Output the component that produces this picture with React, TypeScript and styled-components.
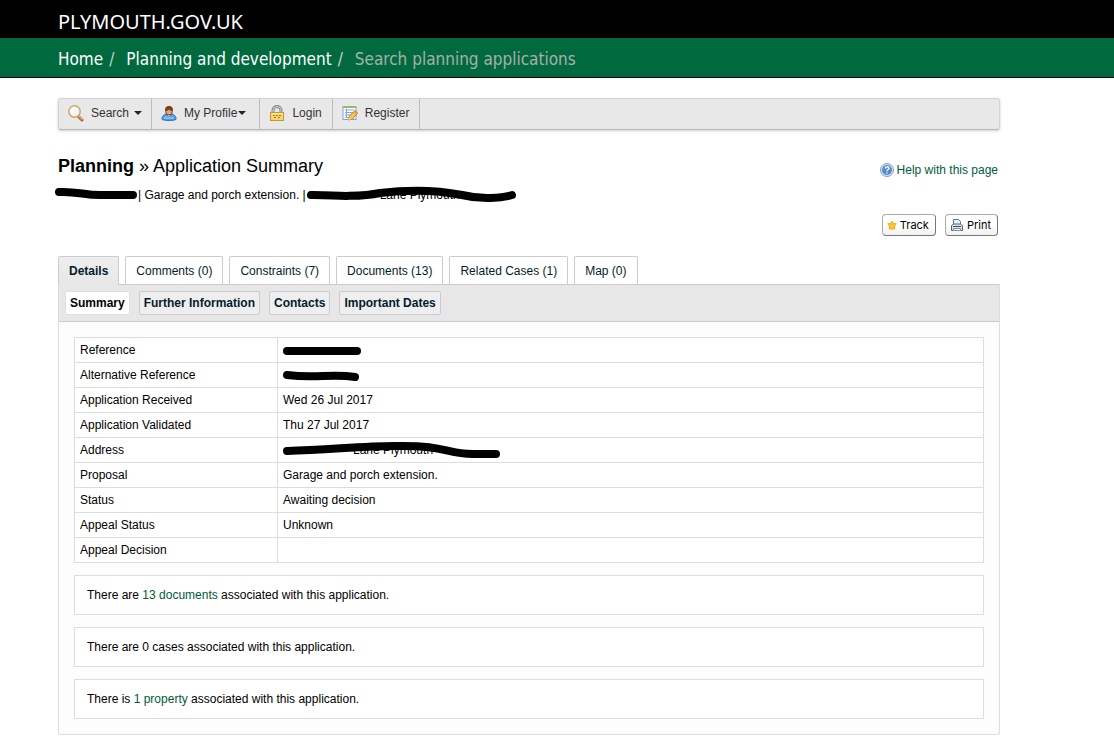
import React from "react";
import styled, { createGlobalStyle } from "styled-components";

const GlobalStyle = createGlobalStyle`
  * { box-sizing: border-box; }
  body {
    margin: 0;
    background: #fff;
    color: #000;
    font: 12px/16px "Liberation Sans", Arial, sans-serif;
  }
  a { color: #005c37; text-decoration: none; }
  svg { display: block; flex: none; }
`;

const SiteBar = styled.header`
  background: #000;
  height: 38px;
  padding: 7px 58px 0;
  a {
    color: #fff;
    font: 20px/30px "Noto Sans", Tahoma, sans-serif;
  }
`;

const Breadcrumb = styled.nav`
  display: flex;
  align-items: center;
  height: 40px;
  padding: 2px 58px 0;
  background: #006a3e;
  border-bottom: 1px solid #000;
  color: #ccc;
  font: 17px/24px "DejaVu Sans Condensed", Tahoma, "Noto Sans", sans-serif;
  a { color: #fff; }
`;

const Slash = styled.span`
  margin: 0 12px 0 6px;
`;

const Crumb = styled.span`
  color: #a9aeab;
`;

const Page = styled.main`
  padding: 20px 114px 1px 58px;
`;

const Toolbar = styled.nav`
  display: flex;
  height: 32px;
  background: #e8e8e8;
  border: 1px solid #d4d4d4;
  border-bottom-color: #b8b8b8;
  border-radius: 3px;
  box-shadow: 0 1px 3px #ccc;
`;

const ToolbarItem = styled.button<{ $wide?: boolean }>`
  display: flex;
  align-items: center;
  gap: 7px;
  padding: 0 ${(p) => (p.$wide ? 13 : 9)}px 2px 9px;
  border: 0;
  border-right: 1px solid #bcbcc0;
  background: none;
  color: #333;
  font: inherit;
`;

const ToolbarLink = styled(ToolbarItem).attrs({ as: "a" })<{ href?: string }>`
  padding-right: 10px;
  color: #333;
`;

const MenuLabel = styled.span<{ $gap: number }>`
  display: flex;
  align-items: center;
  gap: ${(p) => p.$gap}px;
`;

const Intro = styled.div`
  display: flex;
  justify-content: space-between;
  padding: 24px 2px 0 0;
  height: 126px;
`;

const Title = styled.h1`
  margin: 0;
  font-size: 18px;
  line-height: 24px;
  font-weight: normal;
`;

const Description = styled.p`
  display: flex;
  margin: 9px 0 0;
`;

const Redacted = styled.span<{ $width: number; $indent?: number }>`
  position: relative;
  display: inline-block;
  height: 16px;
  width: ${(p) => p.$width}px;
  padding-left: ${(p) => p.$indent ?? 0}px;
  white-space: nowrap;
  vertical-align: top;
  svg {
    position: absolute;
    left: -4px;
    top: 0;
    overflow: visible;
  }
`;

const Actions = styled.div`
  display: flex;
  flex-direction: column;
  align-items: flex-end;
  gap: 36px;
  padding-top: 8px;
`;

const HelpLink = styled.a`
  display: flex;
  align-items: center;
  gap: 3px;
`;

const ButtonRow = styled.div`
  display: flex;
  gap: 9px;
`;

const ActionButton = styled.button`
  display: flex;
  align-items: center;
  gap: 3px;
  height: 22px;
  padding: 0 6px 0 4px;
  border: 1px solid #aaa;
  border-right-color: #777;
  border-bottom-color: #777;
  border-radius: 4px;
  background: linear-gradient(#fff 50%, #f1f1f1);
  color: #000;
  font: 11px/16px Inter, sans-serif;
`;

const Tabs = styled.nav`
  display: flex;
  gap: 6px;
`;

const Tab = styled.a<{ $active?: boolean }>`
  height: ${(p) => (p.$active ? 29 : 28)}px;
  margin-bottom: ${(p) => (p.$active ? -1 : 0)}px;
  z-index: 1;
  padding: 6px 10px;
  border: 1px solid #ccc;
  border-bottom: 0;
  border-radius: 2px 2px 0 0;
  background: ${(p) => (p.$active ? "linear-gradient(#eee, #e7e7e7)" : "#fff")};
  color: #051c2c;
  font-weight: ${(p) => (p.$active ? "bold" : "normal")};
`;

const Panel = styled.section`
  border: 1px solid #ddd;
  border-top-color: #ccc;
  border-radius: 0 0 3px 3px;
  background: #fdfdfd;
`;

const SubTabs = styled.nav`
  display: flex;
  gap: 9px;
  height: 37px;
  padding: 6px;
  background: #e7e7e7;
  border-bottom: 1px solid #ccc;
`;

const SubTab = styled.a<{ $active?: boolean }>`
  height: 24px;
  padding: 3px 4px;
  border: 1px solid ${(p) => (p.$active ? "#e0e0e0" : "#ccc")};
  border-radius: 2px;
  background: ${(p) => (p.$active ? "#fff" : "#eee")};
  color: ${(p) => (p.$active ? "#000" : "#051c2c")};
  font-weight: bold;
`;

const PanelBody = styled.div`
  display: grid;
  gap: 12px;
  padding: 15px;
`;

const DetailsTable = styled.table`
  width: 100%;
  border-collapse: collapse;
  background: #fff;
  th, td {
    height: 25px;
    padding: 4px 5px;
    border: 1px solid #ddd;
    font-weight: normal;
    text-align: left;
    line-height: 16px;
  }
  th { width: 203px; }
`;

const Note = styled.p`
  margin: 0;
  padding: 11px 12px;
  border: 1px solid #ddd;
  background: #fff;
`;

const Scribble = ({ d }: { d: string }) => (
  <svg width="10" height="16" fill="none" stroke="#000" strokeWidth="8" strokeLinecap="round" strokeLinejoin="round" aria-hidden="true">
    <path d={d} />
  </svg>
);

const Caret = () => (
  <svg width="8" height="4" viewBox="0 0 8 4"><path d="M0 0h8L4 4z" fill="#222" /></svg>
);

const SearchIcon = () => (
  <svg width="16" height="18" viewBox="1 0 16 18">
    <path d="m11 12 4 4" stroke="#9a5d31" strokeWidth="3" strokeLinecap="round" />
    <path d="m11 11.500 4 4" stroke="#e1ab68" strokeWidth="1.500" strokeLinecap="round" />
    <circle cx="7.500" cy="7.500" r="5.700" fill="#eef7ff" stroke="#d8a657" strokeWidth="1.500" />
    <path d="M4.500 8a3 3 0 0 1 3-3.500" stroke="#fff" strokeWidth="1.500" fill="none" />
  </svg>
);

const ProfileIcon = () => (
  <svg width="16" height="16" viewBox="0 0 16 16">
    <path d="M1.200 14.500c-1-1.500 1-5 4-5.500l2.800 2 2.800-2c3 .5 5 4 4 5.500-2 1.200-11.600 1.200-13.600 0z" fill="#5ba2ee" stroke="#2864bb" />
    <path d="M3 13h10" stroke="#a6d2ff" />
    <path d="m6 9 2 2.500L10 9z" fill="#fff" />
    <ellipse cx="8" cy="6.500" rx="3.300" ry="3.500" fill="#e8a878" stroke="#7c3f1b" />
    <path d="M4.200 6C3.500 2.500 5.500 1 8 1s4.500 1.500 3.800 5c-1.800 0-2.800-.6-3.800-1.600C7 5.400 6 6 4.200 6z" fill="#78411f" />
  </svg>
);

const LoginIcon = () => (
  <svg width="16" height="16" viewBox="0 0 16 16">
    <path d="M4 8V5a4 3.500 0 0 1 8 0v3" fill="none" stroke="#858585" strokeWidth="3" />
    <path d="M4 8V5a4 3.500 0 0 1 8 0v3" fill="none" stroke="#d5d5d5" />
    <rect x="1.500" y="7.500" width="13" height="8" fill="#f5d66c" stroke="#c89531" />
    <path d="M2.500 8.500h11" stroke="#fff1b0" />
    <path d="M4 10.500h2m1 0h2m1 0h2M5 12.500h2m2 0h2" stroke="#b77c1c" />
  </svg>
);

const RegisterIcon = () => (
  <svg width="16" height="16" viewBox="0 0 16 16">
    <rect x="1" y="1.500" width="13" height="13" fill="#fff" stroke="#79a4d9" />
    <path d="M1 2h13" stroke="#91bc70" strokeWidth="2" />
    <path d="M3 5h9M3 7.500h9M3 10h7M3 12.500h4M4.500 4v9" stroke="#86a9d6" />
    <path d="m6.500 15 1-4L13 5.500 15.500 8 10.500 14z" fill="#f8c449" stroke="#c37b28" />
    <path d="m12.500 6 2.500 2.500" stroke="#e58b66" strokeWidth="2" />
    <path d="m6.500 15 1-3 2 2z" fill="#fae3b7" />
  </svg>
);

const HelpIcon = () => (
  <svg width="14" height="14" viewBox="0 0 14 14">
    <circle cx="7" cy="7" r="6.500" fill="#d6e4f4" stroke="#7f9fcb" />
    <circle cx="7" cy="7" r="5" fill="#5a88c7" />
    <path d="M5.200 5.500c0-2.300 3.800-2.300 3.800-.2C9 6.600 7 6.500 7 8.200M7 9.300v1.200" fill="none" stroke="#fff" strokeWidth="1.300" />
  </svg>
);

const StarIcon = () => (
  <svg width="10" height="10" viewBox="0 0 10 10">
    <path d="m5 1 1.200 2.500 3 .2-1.700 2.300.3 3H2.200l.3-3L.8 3.700l3-.2z" fill="#fac42f" stroke="#f0ad22" strokeLinejoin="round" />
  </svg>
);

const PrintIcon = () => (
  <svg width="14" height="14" viewBox="0 0 14 14">
    <path d="M3.500 7V1.500h5l2 2V7" fill="#e8f2ff" stroke="#5079bd" />
    <path d="M1.500 12.500v-5l2-1.500h7l2 1.500v5z" fill="#dce0e8" stroke="#596170" />
    <path d="M3 8.500h8" stroke="#454c5a" />
    <path d="M3.500 10.500h7v2h-7z" fill="#fff" stroke="#7992bc" />
  </svg>
);

const tabs = ["Details", "Comments (0)", "Constraints (7)", "Documents (13)", "Related Cases (1)", "Map (0)"];
const subTabs = ["Summary", "Further Information", "Contacts", "Important Dates"];

const details: [string, React.ReactNode][] = [
  ["Reference", <Redacted $width={80}><Scribble d="M8 9H78" /></Redacted>],
  ["Alternative Reference", <Redacted $width={80}><Scribble d="M8 8Q24 10 44 9T76 10" /></Redacted>],
  ["Application Received", "Wed 26 Jul 2017"],
  ["Application Validated", "Thu 27 Jul 2017"],
  ["Address", <Redacted $width={220} $indent={70}>Lane Plymouth<Scribble d="M8 9C50 8 82 4 116 4C168 3 166 12 194 12H217" /></Redacted>],
  ["Proposal", "Garage and porch extension."],
  ["Status", "Awaiting decision"],
  ["Appeal Status", "Unknown"],
  ["Appeal Decision", ""],
];

export default function App() {
  return (
    <>
      <GlobalStyle />
      <SiteBar><a href="#home">PLYMOUTH.GOV.UK</a></SiteBar>
      <Breadcrumb aria-label="Breadcrumb">
        <a href="#home">Home</a><Slash>/</Slash>
        <a href="#planning">Planning and development</a><Slash>/</Slash>
        <Crumb>Search planning applications</Crumb>
      </Breadcrumb>
      <Page>
        <Toolbar>
          <ToolbarItem type="button"><SearchIcon /><MenuLabel $gap={5}>Search <Caret /></MenuLabel></ToolbarItem>
          <ToolbarItem type="button" $wide><ProfileIcon /><MenuLabel $gap={1}>My Profile<Caret /></MenuLabel></ToolbarItem>
          <ToolbarLink href="#login"><LoginIcon />Login</ToolbarLink>
          <ToolbarLink href="#register"><RegisterIcon />Register</ToolbarLink>
        </Toolbar>
        <Intro>
          <div>
            <Title><strong>Planning</strong> » Application Summary</Title>
            <Description>
              <Redacted $width={80}><Scribble d="M5 5C24 4 32 9 50 8H79" /></Redacted>
              <span>| Garage and porch extension. |</span>
              <Redacted $width={210} $indent={74}>Lane Plymouth<Scribble d="M9 8C36 9 60 10 78 6C110 2 140 4 160 8C180 13 200 11 210 8" /></Redacted>
            </Description>
          </div>
          <Actions>
            <HelpLink href="#help"><HelpIcon />Help with this page</HelpLink>
            <ButtonRow>
              <ActionButton type="button"><StarIcon />Track</ActionButton>
              <ActionButton type="button"><PrintIcon />Print</ActionButton>
            </ButtonRow>
          </Actions>
        </Intro>
        <Tabs>
          {tabs.map((t, i) => <Tab key={t} href={`#tab-${i}`} $active={i === 0}>{t}</Tab>)}
        </Tabs>
        <Panel>
          <SubTabs>
            {subTabs.map((t, i) => <SubTab key={t} href={`#section-${i}`} $active={i === 0}>{t}</SubTab>)}
          </SubTabs>
          <PanelBody>
            <DetailsTable>
              <tbody>
                {details.map(([label, value]) => (
                  <tr key={label}><th scope="row">{label}</th><td>{value}</td></tr>
                ))}
              </tbody>
            </DetailsTable>
            <Note>There are <a href="#documents">13 documents</a> associated with this application.</Note>
            <Note>There are 0 cases associated with this application.</Note>
            <Note>There is <a href="#property">1 property</a> associated with this application.</Note>
          </PanelBody>
        </Panel>
      </Page>
    </>
  );
}
